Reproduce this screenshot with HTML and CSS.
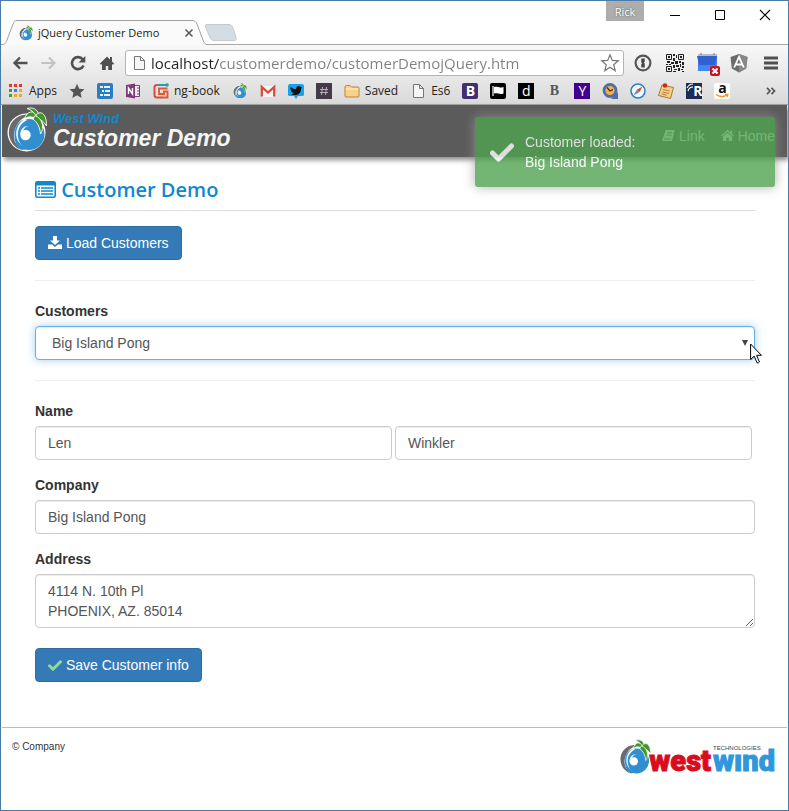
FILE: index.html
```
<!DOCTYPE html>
<html lang="en">
<head>
    <meta charset="UTF-8">
    <meta name="viewport" content="width=device-width, initial-scale=1.0">
    <title>jQuery Customer Demo</title>
    <link rel="stylesheet" href="styles.css">
</head>
<body>
    <!-- Shared icons -->
    <svg class="sprite" aria-hidden="true">
        <symbol id="globe" viewBox="0 0 40 45">
            <circle cx="19.500" cy="25.500" r="19" fill="#fff"/>
            <path d="M19 7.500C9 8 1.800 16 1.800 25.500 1.800 33 7 40.500 14 43 9 38 6.500 31 7.500 25 9 17 13 12 20 9.500z" fill="#6b6b6b"/>
            <circle cx="22" cy="27.500" r="15.500" fill="#318fd0"/>
            <path d="M8 35C5 25 9 16 18 11.500L20 13C12 17 9 25 12 34c1 3 3 5 5 6.500C13 40 10 38 8 35z" fill="#fff"/>
            <path d="M17 12.500C9 17 7.500 28 11 34c3 5 8 7 12 7L15 43C9 40 7 33 7.500 26 8 20 12 14 17 12.500z" fill="#318fd0"/>
            <circle cx="18.500" cy="28" r="5.200" fill="#fff"/>
            <path d="M13.300 28C13 22 17 18.500 22 19c-3 .5-5 2-6 5z" fill="#fff"/>
            <g fill="#42942c" stroke="#fff" stroke-width=".9">
                <path d="M31 9C26 2.500 20 4 17.500 12 22 8.500 26 9.500 31 13z"/>
                <path d="M32 9C31 3 27-.5 20 1.500 25 3 28 6 30 11z"/>
                <path d="M29 8C35 2 40 9 39.500 19 37 14.500 34 12.500 29 11z"/>
                <path d="M28 8.500C35 11 38 20 33.500 27 33 20 30 15 26 12z"/>
            </g>
        </symbol>
        <symbol id="doc" viewBox="0 0 16 16">
            <path d="M3.500 1.500h6l4 4v9h-10zM9.500 1.500v4h4" fill="#f6f6f6" stroke="#777"/>
        </symbol>
        <symbol id="check" viewBox="0 0 24 19">
            <path d="M2.500 10l6 6L21.500 3" fill="none" stroke="currentColor" stroke-width="5" stroke-linejoin="round" stroke-linecap="round"/>
        </symbol>
    </svg>

    <div class="window">
        <!-- Title bar -->
        <div class="titlebar">
            <div class="tab">
                <svg class="tab-shape" width="206" height="25" viewBox="0 0 206 25" aria-hidden="true">
                    <path d="M0 25C4 24 4 22 5 20L11 4C12 1.500 13 .5 15 .5H190C193 .5 194 2 195 4L201 20C202 23 203 24 206 25" fill="#fafafa" stroke="#a0a0a0"/>
                </svg>
                <svg class="tab-icon" width="14" height="16"><use href="#globe"/></svg>
                <span class="tab-title">jQuery Customer Demo</span>
                <button class="tab-close" aria-label="Close tab">
                    <svg width="10" height="10" viewBox="0 0 10 10"><path d="M1.500 1.500l7 7M8.500 1.500l-7 7" stroke="#5a5a5a" stroke-width="1.600"/></svg>
                </button>
            </div>
            <button class="new-tab" aria-label="New tab">
                <svg width="33" height="17" viewBox="0 0 33 17"><path d="M2.500 .5H25c2 0 3 1 4 3l3 10c.6 2 0 3-2 3H10c-2 0-3-1-4-3L1.500 3C1 1.500 1 .5 2.500 .5z" fill="#d4dce4" stroke="#c4cad0"/></svg>
            </button>
            <div class="window-controls">
                <button class="profile">Rick</button>
                <button class="control" aria-label="Minimize"><svg width="12" height="12" viewBox="0 0 12 12"><path d="M1 6.500h10" stroke="#000"/></svg></button>
                <button class="control" aria-label="Maximize"><svg width="12" height="12" viewBox="0 0 12 12"><path d="M1.500 1.500h9v9h-9z" fill="none" stroke="#000"/></svg></button>
                <button class="control" aria-label="Close"><svg width="12" height="12" viewBox="0 0 12 12"><path d="M1 1l10 10M11 1L1 11" stroke="#000" stroke-width="1.100"/></svg></button>
            </div>
        </div>

        <div class="chrome">
            <!-- Toolbar -->
            <div class="toolbar">
                <button class="nav-button" aria-label="Back"><svg width="16" height="16" viewBox="0 0 16 16"><path d="M15.500 8H2.500M8 2.500L2.500 8 8 13.500" fill="none" stroke="#505050" stroke-width="2.400"/></svg></button>
                <button class="nav-button" aria-label="Forward"><svg width="16" height="16" viewBox="0 0 16 16"><path d="M.5 8h13M8 2.500L13.500 8 8 13.500" fill="none" stroke="#c2c2c2" stroke-width="2.200"/></svg></button>
                <button class="nav-button" aria-label="Reload"><svg width="16" height="16" viewBox="0 0 16 16"><path d="M12.800 4.500A6 6 0 1 0 13.500 10.500" fill="none" stroke="#505050" stroke-width="2.600"/><path d="M15.300 1v6.500H8.500z" fill="#505050"/></svg></button>
                <button class="nav-button" aria-label="Home"><svg width="16" height="16" viewBox="0 0 16 16"><path d="M8 1.500L.8 8.800l1.200 1L3 9v6h3.800v-4h2.400v4H13V9l1 .8 1.200-1L13 6.600V2h-2v2.600z" fill="#505050"/></svg></button>
                <div class="omnibox">
                    <svg width="16" height="18" viewBox="0 0 16 16"><use href="#doc"/></svg>
                    <input type="text" class="url" aria-label="Address" value="localhost/customerdemo/customerDemojQuery.htm">
                    <button class="star" aria-label="Bookmark this page"><svg width="20" height="20" viewBox="0 0 20 20"><path d="M10 1.800l2.300 5.600 6 .4-4.600 3.900 1.500 5.900L10 14.300l-5.200 3.300 1.500-5.900L1.700 7.800l6-.4z" fill="#fff" stroke="#777" stroke-width="1.200"/></svg></button>
                </div>
                <button class="ext-button" aria-label="Password manager"><svg width="18" height="18" viewBox="0 0 18 18"><circle cx="9" cy="9" r="7.400" fill="#eee" stroke="#555" stroke-width="2.200"/><path d="M7.300 4.500h3.400v3.300l-.9.900.9.900v3.900H7.300v-3.300l.9-.9-.9-.9z" fill="#444"/></svg></button>
                <button class="ext-button" aria-label="QR code"><svg width="18" height="18" viewBox="0 0 18 18"><path d="M0 0h18v18H0z" fill="#eee"/><path d="M7 0h2v2H7zM10 1h1v3h-1zM7 4h2v3H7zM1 7h3v2H1zM5 8h3v2H5zM9 7h3v3H9zM13 7h2v2h-2zM16 8h2v3h-2zM0 10h2v1H0zM3 10h2v1H3zM7 11h2v3H7zM10 11h3v2h-3zM14 10h1v3h-1zM16 12h2v2h-2zM8 15h3v1H8zM12 14h2v3h-2zM15 15h2v1h-2zM7 17h3v1H7zM16 17h2v1h-2z" fill="#222"/><path d="M.5 .5h5v5h-5zM12.500 .5h5v5h-5zM.5 12.500h5v5h-5z" fill="none" stroke="#222"/><path d="M2 2h2v2H2zM14 2h2v2h-2zM2 14h2v2H2z" fill="#222"/></svg></button>
                <button class="ext-button" aria-label="Calendar"><svg width="26" height="26" viewBox="0 0 26 26"><path d="M4 5h19v16H4z" fill="#4285f4"/><path d="M3 6h20l-2 9H5z" fill="#2f62d0"/><path d="M4 4h19v2H4z" fill="#b8bcc2"/><path d="M7 3v2M20 3v2" stroke="#777"/><rect x="16" y="16" width="10" height="10" rx="2" fill="#c9101c"/><path d="M18.500 18.500l5 5M23.500 18.500l-5 5" stroke="#fff" stroke-width="2.200"/></svg></button>
                <button class="ext-button" aria-label="Inspector"><svg width="18" height="19" viewBox="0 0 18 19"><path d="M9 0l8.500 3-1.300 11.500L9 18.500l-7.200-4L.5 3z" fill="#6c6c6c"/><path d="M9 0l8.500 3-1.300 11.500L9 18.500z" fill="#888"/><path d="M4.200 13.500L9 3l4.800 10.500M6 10.500h6" fill="none" stroke="#fff" stroke-width="1.800"/></svg></button>
                <button class="ext-button" aria-label="Menu"><svg width="14" height="14" viewBox="0 0 14 14"><path d="M0 2h14M0 7h14M0 12h14" stroke="#505050" stroke-width="2.800"/></svg></button>
            </div>

            <!-- Bookmarks -->
            <nav class="bookmarks" aria-label="Bookmarks">
                <a href="#"><svg viewBox="0 0 16 16"><path d="M1 1h3v3H1zM6 1h3v3H6zM11 1h3v3h-3z" fill="#dc3c30"/><path d="M1 6h3v3H1zM1 11h3v3H1z" fill="#3c9a50"/><path d="M6 6h3v3H6z" fill="#3b7ded"/><path d="M11 6h3v3h-3zM6 11h3v3H6zM11 11h3v3h-3z" fill="#eeaa22"/></svg>Apps</a>
                <a href="#" aria-label="Favorites"><svg viewBox="0 0 16 16"><path d="M8 .8l2.200 5 5.300.5-4 3.500 1.200 5.300L8 12.300l-4.700 2.800 1.200-5.300-4-3.500 5.300-.5z" fill="#555"/></svg></a>
                <a href="#" aria-label="Tasks"><svg viewBox="0 0 16 16"><rect width="16" height="16" rx="2" fill="#2a7dbe"/><path d="M3 4h3M7 4h6M5 8h2M8 8h5M3 12h3M7 12h6" stroke="#e4f2fb" stroke-width="1.800"/></svg></a>
                <a href="#" aria-label="OneNote"><svg viewBox="0 0 16 16"><path d="M9 2.500h5.500v11H9zM12 5h3M12 8h3M12 11h3" fill="#eee" stroke="#80397b"/><path d="M1 2l9-1.500v15L1 14z" fill="#80397b"/><path d="M3.500 11V5l4 6V5" fill="none" stroke="#fff" stroke-width="1.400"/></svg></a>
                <a href="#"><svg viewBox="0 0 16 16"><path d="M12 2H4C2 2 1.500 3 1.500 4v8c0 2 1 2.500 2.500 2.500h5" fill="none" stroke="#d94b3e" stroke-width="2"/><path d="M4 2h10" stroke="#2a9bb5" stroke-width="2"/><circle cx="14" cy="2" r="1.800" fill="#2a9bb5"/><path d="M14.500 5.500H6v5.500h5V8.500h3.500v6H8" fill="none" stroke="#e4572f" stroke-width="1.900"/></svg>ng-book</a>
                <a href="#" aria-label="West Wind"><svg viewBox="0 0 40 45"><use href="#globe"/></svg></a>
                <a href="#" aria-label="Mail"><svg viewBox="0 0 16 16"><path d="M1 3h14v11H1z" fill="#f5f5f5"/><path d="M1.800 13.500V4L8 9.500 14.200 4v9.500" fill="none" stroke="#d9463a" stroke-width="2.200"/></svg></a>
                <a href="#" aria-label="Twitter"><svg viewBox="0 0 16 16"><path d="M2 1h12q2 0 2 2v9q0 1-2 1h-4l-2 3-2-3H2q-2 0-2-1V3q0-2 2-2z" fill="#17a2ee"/><path d="M3 4c2 2 3 2 5 2 0-2 1-3 3-3l2 1 1 0-1 2c0 4-3 6-6 6-2 0-3 0-4-1 1 0 2 0 3-1-2 0-3-2-3-3-1-1-1-2 0-3z" fill="#111"/></svg></a>
                <a href="#" aria-label="Channel"><svg viewBox="0 0 16 16"><path d="M0 0h16v16H0z" fill="#453a4a"/><path d="M6.500 4l-1 8M10.500 4l-1 8M4 6.500h8M4 9.500h8" stroke="#b5aeb8"/></svg></a>
                <a href="#"><svg viewBox="0 0 16 16"><path d="M1 4q0-1.500 1.500-1.500H6L7.500 4H14q1 0 1 1v8q0 1-1 1H2q-1 0-1-1z" fill="#f8d18b" stroke="#b98239"/><path d="M1.500 6h13" stroke="#fff0cc"/></svg>Saved</a>
                <a href="#"><svg><use href="#doc"/></svg>Es6</a>
                <a href="#" class="letter purple" aria-label="Bootstrap"><b>B</b></a>
                <a href="#" aria-label="Flag"><svg viewBox="0 0 16 16"><rect width="16" height="16" rx="2"/><path d="M3 3v10" stroke="#fff" stroke-width="1.200"/><path d="M4 4c3-1 5 1.500 9.500 0v6.500c-4 1.500-6-1-9.500 0z" fill="#fff"/></svg></a>
                <a href="#" class="letter black" aria-label="Devdocs">d</a>
                <a href="#" class="letter plain" aria-label="Bold"><b>B</b></a>
                <a href="#" class="letter yahoo" aria-label="Yahoo">Y</a>
                <a href="#" aria-label="Clock"><svg viewBox="0 0 16 16"><circle cx="8" cy="7.500" r="6" fill="#f4b04a" stroke="#4c6fae" stroke-width="2.800"/><path d="M5 4.500L8 8l3-1.500" fill="none" stroke="#333" stroke-width="1.200"/><path d="M16 9v7H9z" fill="#4c6fae"/></svg></a>
                <a href="#" aria-label="Compass"><svg viewBox="0 0 16 16"><circle cx="8" cy="8" r="7" fill="#f4f8fb" stroke="#2f80bd" stroke-width="1.600"/><path d="M12.500 3.500L9.200 9.200 6.800 6.800z" fill="#e03c31"/><path d="M3.500 12.500l3.300-5.700 2.400 2.400z" fill="#5b8fc0"/></svg></a>
                <a href="#" aria-label="Notes"><svg viewBox="0 0 16 16"><path d="M4 2l11.500 2.500-3 11L.5 12.500z" fill="#f6cf83" stroke="#a87838"/><path d="M5 6.500l6.500 1.500M4.500 9l6.500 1.500M3.800 11l5 1.200" stroke="#b08548"/><circle cx="7" cy="2.500" r="2.300" fill="#cc2a1d"/></svg></a>
                <a href="#" class="letter radio" aria-label="Radio"><svg viewBox="0 0 16 16"><path d="M0 0h16v16H0z" fill="#1d2c52"/><path d="M1 5q2-4 6-4M2 8q1-4 5-4" fill="none" stroke="#fff" stroke-width="1.100"/></svg><b>R</b></a>
                <a href="#" class="letter amazon" aria-label="Amazon"><b>a</b><svg viewBox="0 0 16 16"><path d="M2 11.500q6 4 11 .5M11 11.500h2.800l-.5 2.500" fill="none" stroke="#f29a1f" stroke-width="1.500"/></svg></a>
                <button class="more" aria-label="More bookmarks"><svg width="10" height="8" viewBox="0 0 10 8"><path d="M1 .8L4 4 1 7.200M5.500 .8l3 3.200-3 3.200" fill="none" stroke="#555" stroke-width="1.700"/></svg></button>
            </nav>
        </div>

        <!-- Page -->
        <div class="page">
            <header class="banner">
                <svg class="banner-logo" width="40" height="45"><use href="#globe"/></svg>
                <div class="banner-title">
                    <div class="banner-small">West Wind</div>
                    <div class="banner-big">Customer Demo</div>
                </div>
                <nav class="banner-nav">
                    <a href="#"><svg width="13" height="13" viewBox="0 0 14 14"><path d="M4 1h9.500L10.800 13H1.500Q0 13 .5 11z" fill="currentColor"/><path d="M5.500 4h5.500M5 6.500h5.500M2 10.800h7.500" stroke="#5b5b5b" stroke-width="1"/></svg> Link</a>
                    <a href="#"><svg width="13" height="13" viewBox="0 0 14 14"><path d="M7 1L0 7.200l.8.900L7 3l6.200 5.100.8-.9-2.200-2V1.800H10v1.800zM2 8v5h3.800V9.500h2.400V13H12V8L7 4z" fill="currentColor"/></svg> Home</a>
                </nav>
            </header>

            <div class="toast" role="status">
                <svg class="toast-icon" width="24" height="19"><use href="#check"/></svg>
                <div>Customer loaded:<br>Big Island Pong</div>
            </div>

            <main class="container">
                <h1><svg width="21" height="17" viewBox="0 0 21 17" aria-hidden="true"><rect x=".8" y=".8" width="19.400" height="15.400" rx="1.500" fill="#fff" stroke="currentColor" stroke-width="1.600"/><path d="M1 1h19v3.500H1z" fill="currentColor"/><path d="M3 7h2M6 7h12M3 10h2M6 10h12M3 13h2M6 13h12" stroke="currentColor" stroke-width="1.400"/></svg> Customer Demo</h1>

                <button class="btn"><svg width="14" height="13" viewBox="0 0 14 13"><path d="M5 0h4v4.500h3L7 9 2 4.500h3z" fill="currentColor"/><path d="M0 8.500h4l3 2.500 3-2.500h4V13H0z" fill="currentColor"/></svg> Load Customers</button>

                <hr>

                <form>
                    <label for="customers">Customers</label>
                    <div class="select-wrap">
                        <select id="customers" class="form-control focused">
                            <option>Big Island Pong</option>
                        </select>
                        <svg class="select-arrow" width="6" height="6" viewBox="0 0 6 6" aria-hidden="true"><path d="M0 0h6L3 6z" fill="#444"/></svg>
                        <svg class="cursor" width="13" height="21" viewBox="0 0 13 21" aria-hidden="true"><path d="M.6 1v15.500l3.500-3.400 3 6.700q1.400.6 2.300-.8L6.600 12.300h4.800z" fill="#fff" stroke="#000"/></svg>
                    </div>

                    <hr>

                    <div class="form-group">
                        <label for="first-name">Name</label>
                        <div class="name-row">
                            <input type="text" id="first-name" class="form-control" value="Len">
                            <input type="text" class="form-control" aria-label="Last name" value="Winkler">
                        </div>
                    </div>
                    <div class="form-group">
                        <label for="company">Company</label>
                        <input type="text" id="company" class="form-control" value="Big Island Pong">
                    </div>
                    <div class="form-group">
                        <label for="address">Address</label>
                        <textarea id="address" class="form-control" rows="2">4114 N. 10th Pl
PHOENIX, AZ. 85014</textarea>
                    </div>
                    <button type="button" class="btn save"><svg width="14" height="11" viewBox="0 0 24 19"><use href="#check"/></svg> Save Customer info</button>
                </form>
            </main>

            <footer class="footer">
                <span class="company">© Company</span>
                <a href="#" class="footer-logo" aria-label="West Wind Technologies">
                    <svg width="32" height="36"><use href="#globe"/></svg>
                    <span class="west">west</span><span class="wind">wınd<span class="tech">TECHNOLOGIES</span></span>
                </a>
            </footer>
        </div>
    </div>
</body>
</html>
```
FILE: styles.css
```
* {
    box-sizing: border-box;
}

body {
    margin: 0;
    font-family: "Liberation Sans", Arial, sans-serif;
    font-size: 14px;
    line-height: 20px;
    color: #333;
    background: #fff;
}

button {
    padding: 0;
    border: none;
    background: none;
    font-family: inherit;
    cursor: pointer;
}

a {
    color: inherit;
    text-decoration: none;
}

.sprite {
    position: absolute;
    width: 0;
    height: 0;
}

/* Browser window */
.window {
    display: flex;
    flex-direction: column;
    min-height: 100vh;
    padding: 0 1px;
    border: 1px solid #4a7ba9;
}

.titlebar {
    display: flex;
    align-items: flex-end;
    height: 43px;
    font-family: "Open Sans", sans-serif;
}

.tab {
    position: relative;
    z-index: 1;
    display: flex;
    align-items: center;
    width: 206px;
    height: 25px;
    margin: 0 -4px -1px 0;
    padding: 0 14px 0 17px;
    font-size: 11px;
    color: #222;
}

.tab-shape {
    position: absolute;
    top: 0;
    left: 0;
}

.tab-icon,
.tab-title,
.tab-close {
    position: relative;
}

.tab-title {
    flex: 1;
    margin-left: 5px;
    white-space: nowrap;
}

.tab-close {
    display: flex;
}

.new-tab {
    display: flex;
    margin-bottom: 3px;
}

.window-controls {
    display: flex;
    align-self: flex-start;
    margin-left: auto;
}

.profile {
    width: 38px;
    height: 20px;
    margin-right: 8px;
    background: #adadad;
    color: #fff;
    font-size: 11px;
    text-shadow: 0 0 2px #555;
}

.control {
    display: flex;
    align-items: center;
    justify-content: center;
    width: 45px;
    height: 28px;
}

.chrome {
    margin: 0 -1px;
    padding: 0 1px;
    border-top: 1px solid #a8a8a8;
    border-bottom: 1px solid #a3a3a3;
    background: linear-gradient(#f8f8f8, #dadada);
    font-family: "Open Sans", sans-serif;
    color: #222;
}

.toolbar {
    display: flex;
    align-items: center;
    height: 36px;
    padding-left: 3px;
}

.nav-button,
.ext-button {
    display: flex;
    align-items: center;
    justify-content: center;
    flex: none;
    width: 29px;
    height: 26px;
}

.ext-button {
    width: 32px;
}

.omnibox {
    display: flex;
    align-items: center;
    flex: 1;
    height: 26px;
    margin: 0 3px 0 4px;
    padding: 0 3px 0 5px;
    border: 1px solid #b4b4b4;
    border-radius: 3px;
    background: #fff;
}

.url {
    flex: 1;
    min-width: 0;
    padding: 0;
    margin-left: 4px;
    border: none;
    outline: none;
    font-family: inherit;
    font-size: 15px;
    color: transparent;
    background: linear-gradient(90deg, #222 68px, #808080 68px);
    -webkit-background-clip: text;
    background-clip: text;
}

.star {
    display: flex;
}

.bookmarks {
    display: flex;
    align-items: center;
    gap: 12px;
    height: 23px;
    padding: 0 11px 3px 6px;
    font-size: 12px;
}

.bookmarks a {
    display: flex;
    align-items: center;
    gap: 5px;
    height: 16px;
    white-space: nowrap;
}

.bookmarks a svg {
    flex: none;
    width: 16px;
    height: 16px;
}

.bookmarks .letter {
    position: relative;
    justify-content: center;
    width: 16px;
    border-radius: 2px;
    font-size: 14px;
    line-height: 16px;
    color: #fff;
}

.letter b {
    position: relative;
}

.letter svg {
    position: absolute;
    inset: 0;
}

.bookmarks .purple {
    background: #432f70;
}

.bookmarks .black {
    border-radius: 0;
    background: #000;
}

.bookmarks .plain {
    font-family: "Liberation Serif", serif;
    color: #555;
}

.bookmarks .yahoo {
    border-radius: 0;
    background: #400090;
}

.bookmarks .radio {
    justify-content: flex-end;
}

.bookmarks .amazon {
    align-items: flex-start;
    background: #fff;
    color: #111;
    line-height: 10px;
}

.more {
    display: flex;
    margin-left: auto;
}

/* Page */
.page {
    position: relative;
    flex: 1;
    display: flex;
    flex-direction: column;
}

.banner {
    display: flex;
    align-items: flex-start;
    height: 52px;
    padding: 2px 12px 0 5px;
    background: #5b5b5b;
    box-shadow: 2px 3px 5px #888;
}

.banner-title {
    flex: 1;
    margin: 4px 0 0 6px;
    font-style: italic;
    font-weight: bold;
}

.banner-small {
    font-size: 13px;
    line-height: 16px;
    color: #0f88cd;
}

.banner-big {
    font-size: 23px;
    line-height: 22px;
    color: #f5f5f5;
}

.banner-nav {
    display: flex;
    gap: 16px;
    margin-top: 19px;
    font-size: 14px;
    color: #fff;
}

.banner-nav svg {
    vertical-align: -1px;
}

.toast {
    position: absolute;
    top: 12px;
    right: 12px;
    display: flex;
    align-items: center;
    gap: 11px;
    width: 300px;
    padding: 15px;
    border-radius: 3px;
    background: #51a351;
    box-shadow: 0 0 12px #999;
    color: #fff;
    opacity: 0.8;
}

.container {
    padding: 20px 32px 45px 33px;
}

h1 {
    margin: 0 0 15px;
    padding-bottom: 7px;
    border-bottom: 1px solid #ddd;
    font-family: "Open Sans", sans-serif;
    font-size: 20px;
    line-height: 26px;
    font-weight: 600;
    color: #0f88cd;
}

h1 svg {
    vertical-align: -1px;
}

hr {
    margin: 20px 0;
    border: none;
    border-top: 1px solid #eee;
}

label {
    display: block;
    margin-bottom: 5px;
    font-weight: bold;
}

.btn {
    display: block;
    height: 34px;
    padding: 0 12px;
    border: 1px solid #2e6da4;
    border-radius: 4px;
    background: #337ab7;
    color: #fff;
    font-size: 14px;
}

.btn svg {
    vertical-align: -1px;
}

.save {
    margin-top: 20px;
}

.save svg {
    color: #8fdc9a;
}

.form-control {
    display: block;
    width: 100%;
    height: 34px;
    padding: 6px 12px;
    border: 1px solid #ccc;
    border-radius: 4px;
    background: #fff;
    box-shadow: inset 0 1px 1px rgba(0, 0, 0, 0.075);
    font-family: inherit;
    font-size: 14px;
    line-height: 20px;
    color: #555;
    appearance: none;
}

textarea.form-control {
    height: 54px;
    resize: vertical;
}

select.form-control {
    padding-left: 16px;
}

.focused {
    border-color: #66afe9;
    box-shadow: inset 0 1px 1px rgba(0, 0, 0, 0.075), 0 0 8px rgba(102, 175, 233, 0.6);
}

.select-wrap {
    position: relative;
}

.select-arrow {
    position: absolute;
    top: 14px;
    right: 7px;
}

.cursor {
    position: absolute;
    top: 17px;
    right: -8px;
}

.form-group {
    margin-bottom: 15px;
}

.name-row {
    display: flex;
    gap: 3px;
    margin-right: 3px;
}

/* Footer */
.footer {
    display: flex;
    align-items: flex-start;
    justify-content: space-between;
    flex: 1;
    padding: 11px 12px 0 10px;
    border-top: 1px solid #bbb;
}

.company {
    font-size: 10px;
    line-height: 16px;
}

.footer-logo {
    display: flex;
    height: 36px;
    font-family: Roboto, sans-serif;
    font-size: 29px;
    line-height: 44px;
    font-weight: 900;
}

.west {
    margin-left: -2px;
    color: #d90b1c;
    -webkit-text-stroke: 1px #d90b1c;
}

.wind {
    position: relative;
    margin-left: 2px;
    color: #2f97dc;
    -webkit-text-stroke: 1px #2f97dc;
}

.tech {
    position: absolute;
    top: 5px;
    left: 0;
    font-family: "Liberation Sans", Arial, sans-serif;
    font-size: 6px;
    line-height: 8px;
    font-weight: normal;
    color: #444;
    -webkit-text-stroke: 0;
}
```
